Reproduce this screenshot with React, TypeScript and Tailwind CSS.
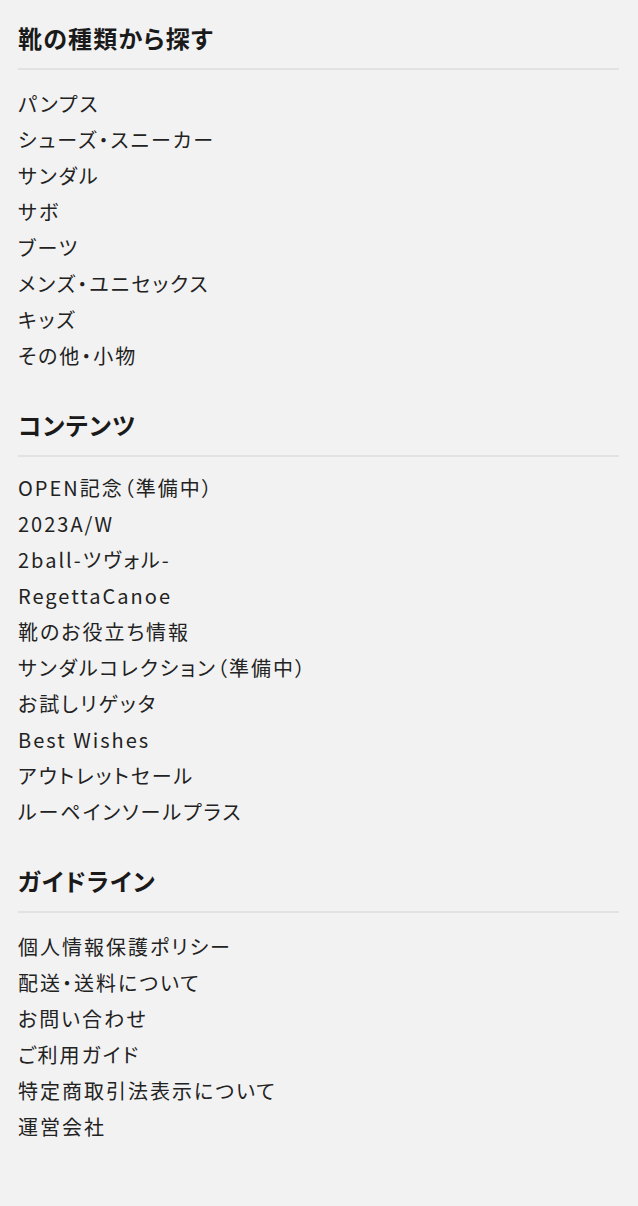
const sections = [
  {
    title: "靴の種類から探す",
    items: [
      "パンプス",
      "シューズ・スニーカー",
      "サンダル",
      "サボ",
      "ブーツ",
      "メンズ・ユニセックス",
      "キッズ",
      "その他・小物",
    ],
  },
  {
    title: "コンテンツ",
    items: [
      "OPEN記念（準備中）",
      "2023A/W",
      "2ball-ツヴォル-",
      "RegettaCanoe",
      "靴のお役立ち情報",
      "サンダルコレクション（準備中）",
      "お試しリゲッタ",
      "Best Wishes",
      "アウトレットセール",
      "ルーペインソールプラス",
    ],
  },
  {
    title: "ガイドライン",
    items: [
      "個人情報保護ポリシー",
      "配送・送料について",
      "お問い合わせ",
      "ご利用ガイド",
      "特定商取引法表示について",
      "運営会社",
    ],
  },
];

export default function App() {
  return (
    <div
      className="min-h-[1206px] w-full bg-[#f2f2f2] px-[18px] pt-[20px] text-[#222]"
      style={{ fontFamily: '"Noto Sans CJK JP", "Noto Sans", sans-serif' }}
    >
      <div className="w-[601px] flex flex-col gap-[33px]">
        {sections.map((section, i) => (
          <section key={section.title}>
            <h2 className="text-[24px] font-bold leading-[36px] tracking-[0.05em] text-[#1a1a1a] pb-[12px] border-b-2 border-[#e2e2e2] [font-feature-settings:'palt']">
              {section.title}
            </h2>
            <ul className={(i === 1 ? "pt-[13px]" : "pt-[16px]") + " [font-feature-settings:'palt']"}>
              {section.items.map((item) => (
                <li key={item}>
                  <a href="#" className="block text-[20px] leading-[36px] tracking-[0.1em]">
                    {item}
                  </a>
                </li>
              ))}
            </ul>
          </section>
        ))}
      </div>
    </div>
  );
}
